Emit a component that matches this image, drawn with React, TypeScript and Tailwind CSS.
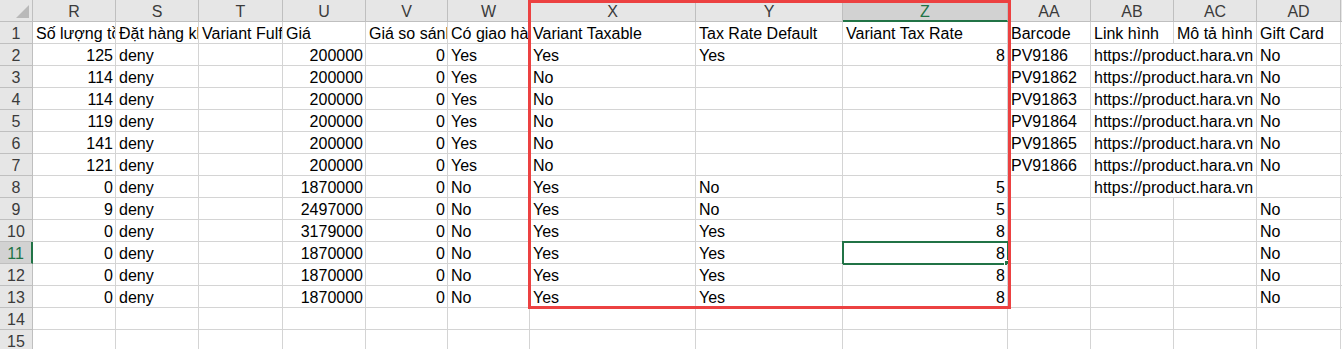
import React from "react";

type Col = { key: string; num?: boolean };

const cols: Col[] = [
  { key: "R", num: true },
  { key: "S" },
  { key: "T" },
  { key: "U", num: true },
  { key: "V", num: true },
  { key: "W" },
  { key: "X" },
  { key: "Y" },
  { key: "Z", num: true },
  { key: "AA" },
  { key: "AB" },
  { key: "AC" },
  { key: "AD" },
];

const link = "https://product.hara.vn";

// R S T U V W X Y Z AA AB AC AD
const rows: string[][] = [
  ["Số lượng tồn kho", "Đặt hàng khi hết hàng", "Variant Fulfillment", "Giá", "Giá so sánh", "Có giao hàng", "Variant Taxable", "Tax Rate Default", "Variant Tax Rate", "Barcode", "Link hình", "Mô tả hình", "Gift Card"],
  ["125", "deny", "", "200000", "0", "Yes", "Yes", "Yes", "8", "PV9186", link, "", "No"],
  ["114", "deny", "", "200000", "0", "Yes", "No", "", "", "PV91862", link, "", "No"],
  ["114", "deny", "", "200000", "0", "Yes", "No", "", "", "PV91863", link, "", "No"],
  ["119", "deny", "", "200000", "0", "Yes", "No", "", "", "PV91864", link, "", "No"],
  ["141", "deny", "", "200000", "0", "Yes", "No", "", "", "PV91865", link, "", "No"],
  ["121", "deny", "", "200000", "0", "Yes", "No", "", "", "PV91866", link, "", "No"],
  ["0", "deny", "", "1870000", "0", "No", "Yes", "No", "5", "", link, "", ""],
  ["9", "deny", "", "2497000", "0", "No", "Yes", "No", "5", "", "", "", "No"],
  ["0", "deny", "", "3179000", "0", "No", "Yes", "Yes", "8", "", "", "", "No"],
  ["0", "deny", "", "1870000", "0", "No", "Yes", "Yes", "8", "", "", "", "No"],
  ["0", "deny", "", "1870000", "0", "No", "Yes", "Yes", "8", "", "", "", "No"],
  ["0", "deny", "", "1870000", "0", "No", "Yes", "Yes", "8", "", "", "", "No"],
  [],
  [],
];

const ACTIVE_ROW = 11;
const ACTIVE_COL = "Z";

function HeaderCell({ label, active }: { label: string; active?: boolean }) {
  return (
    <div
      className={
        active
          ? "h-[22px] border-r border-b-2 border-r-[#bfbfbf] border-b-[#217346] bg-[#d2d2d2] pt-[2px] text-center leading-[19px] text-[#217346]"
          : "h-[22px] border-r border-b border-[#bfbfbf] bg-[#e6e6e6] pt-[2px] text-center leading-[19px] text-[#3b3b3b]"
      }
    >
      {label}
    </div>
  );
}

function RowHeader({ n }: { n: number }) {
  const active = n === ACTIVE_ROW;
  return (
    <div
      className={
        active
          ? "h-[22px] border-r-2 border-b border-r-[#217346] border-b-[#bfbfbf] bg-[#d2d2d2] pt-[2px] text-center leading-[20px] text-[#217346]"
          : "h-[22px] border-r border-b border-[#bfbfbf] bg-[#e6e6e6] pt-[2px] text-center leading-[20px] text-[#3b3b3b]"
      }
    >
      {n}
    </div>
  );
}

export default function App() {
  return (
    <div className="relative h-[349px] w-[1342px] overflow-hidden bg-white font-['Liberation_Sans',Arial,sans-serif] text-[16px] text-black">
      <div className="grid grid-cols-[33px_83px_83px_84px_83px_82px_82px_166px_147px_165px_83px_83px_83px_84px_1fr]">
        {/* corner */}
        <div className="relative h-[22px] border-r border-b border-[#bfbfbf] bg-[#e6e6e6]">
          <div className="absolute right-[3px] bottom-[3px] h-0 w-0 border-t-[13px] border-l-[13px] border-t-transparent border-l-transparent border-r-0 border-b-0 [border-right:0] [border-bottom:13px_solid_#b9b9b9]" />
        </div>
        {cols.map((c) => (
          <HeaderCell key={c.key} label={c.key} active={c.key === ACTIVE_COL} />
        ))}
        <div className="h-[22px] border-b border-[#bfbfbf] bg-[#e6e6e6]" />

        {rows.map((row, ri) => {
          const n = ri + 1;
          const cells: React.ReactNode[] = [];
          for (let ci = 0; ci < cols.length; ci++) {
            const c = cols[ci];
            const v = row[ci] ?? "";
            // link text spills over the empty next column
            const spill = c.key === "AB" && v !== "" && (row[ci + 1] ?? "") === "";
            const right = c.num && n > 1;
            const active = n === ACTIVE_ROW && c.key === ACTIVE_COL;
            cells.push(
              <div
                key={c.key}
                className={
                  "relative h-[22px] overflow-hidden whitespace-nowrap border-r border-b border-[#d4d4d4] pl-[3px] pr-[2px] pt-[2px] leading-[20px] " +
                  (right ? "text-right " : "text-left ") +
                  (spill ? "col-span-2 " : "") +
                  (active ? "overflow-visible " : "")
                }
              >
                {v}
                {active && (
                  <>
                    <div className="pointer-events-none absolute -top-px -left-px h-[24px] w-[167px] border-2 border-[#217346]" />
                    <div className="absolute -right-[3px] -bottom-[3px] h-[6px] w-[6px] border border-white bg-[#217346]" />
                  </>
                )}
              </div>
            );
            if (spill) ci++;
          }
          return (
            <React.Fragment key={n}>
              <RowHeader n={n} />
              {cells}
              <div className="h-[22px] border-b border-[#d4d4d4]" />
            </React.Fragment>
          );
        })}
      </div>

      {/* highlight frame around the tax columns */}
      <div className="pointer-events-none absolute top-0 left-[528px] h-[309px] w-[483px] border-[3px] border-[#ec4141]" />
    </div>
  );
}
